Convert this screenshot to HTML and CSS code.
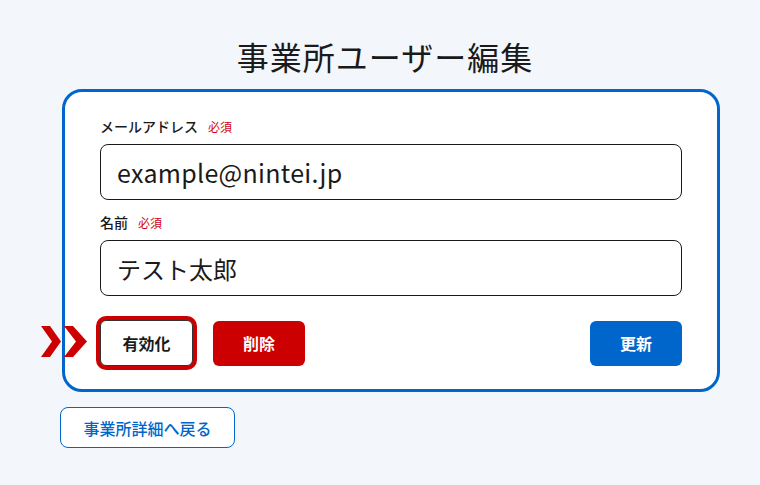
FILE: index.html
```html
<!DOCTYPE html>
<html lang="ja">
<head>
<meta charset="utf-8">
<link rel="stylesheet" href="styles.css">
</head>
<body>
<main class="page">
  <h1 class="title">事業所ユーザー編集</h1>
  <section class="card">
    <div class="field">
      <label class="label">メールアドレス<span class="req">必須</span></label>
      <div class="input input-latin">example@nintei.jp</div>
    </div>
    <div class="field">
      <label class="label">名前<span class="req">必須</span></label>
      <div class="input">テスト太郎</div>
    </div>
    <div class="actions">
      <div class="left">
        <div class="enable-wrap">
          <svg class="chevrons" width="50" height="32" viewBox="0 0 50 32">
            <polygon points="0,0 9,0 20,15.5 9,31 0,31 11,15.5" fill="#cc0000"/>
            <polygon points="23,0 32,0 46,15.5 32,31 23,31 35,15.5" fill="#cc0000"/>
          </svg>
          <button class="btn btn-enable">有効化</button>
        </div>
        <button class="btn btn-delete">削除</button>
      </div>
      <button class="btn btn-update">更新</button>
    </div>
  </section>
  <div class="back-row">
    <button class="btn-back">事業所詳細へ戻る</button>
  </div>
</main>
</body>
</html>
```
FILE: styles.css
```css
html, body {
  margin: 0;
  padding: 0;
  background: #f3f6fa;
}
body {
  font-family: "Noto Sans CJK JP", "Noto Sans", sans-serif;
  color: #1a1a1a;
}
.page {
  width: 658px;
  margin-left: 62px;
  padding-top: 34px;
}
.title {
  margin: 0 0 11px 0;
  font-size: 32px;
  font-weight: 400;
  line-height: 44px;
  letter-spacing: 1px;
  text-align: center;
  padding-right: 12px;
  color: #1a1a1a;
}
.card {
  background: #fff;
  border: 3px solid #0066cc;
  border-radius: 20px;
  padding: 25px 35px 23px 35px;
}
.field {
  display: flex;
  flex-direction: column;
  gap: 8px;
  margin-bottom: 13px;
}
.label {
  font-size: 14px;
  line-height: 19px;
  font-weight: 500;
  display: flex;
  align-items: center;
  gap: 10px;
}
.req {
  color: #d0021b;
  font-size: 12px;
  font-weight: 400;
}
.input {
  height: 54px;
  border: 1px solid #1a1a1a;
  border-radius: 8px;
  padding: 0 16px;
  display: flex;
  align-items: center;
  font-size: 24px;
  color: #1a1a1a;
}
.input-latin {
  font-size: 25px;
  letter-spacing: 0.3px;
}
.actions {
  display: flex;
  justify-content: space-between;
  align-items: center;
  padding-top: 11px;
}
.left {
  display: flex;
  align-items: center;
  gap: 20px;
}
.enable-wrap {
  position: relative;
}
.chevrons {
  position: absolute;
  left: -59px;
  top: 6px;
}
.btn {
  width: 93px;
  height: 46px;
  border-radius: 6px;
  font-family: inherit;
  font-size: 16px;
  font-weight: 700;
  cursor: pointer;
  display: block;
}
.btn-enable {
  background: #fff;
  border: 1px solid #333;
  color: #1a1a1a;
  box-shadow: 0 0 0 4px #cc0000;
}
.btn-delete {
  background: #cc0000;
  border: none;
  color: #fff;
  width: 92px;
  height: 45px;
}
.btn-update {
  background: #0066cc;
  border: none;
  color: #fff;
  width: 92px;
  height: 45px;
}
.back-row {
  margin-left: -2px;
  padding-top: 15px;
}
.btn-back {
  width: 175px;
  height: 41px;
  background: #fff;
  border: 1px solid #0066cc;
  border-radius: 8px;
  color: #0066cc;
  font-family: inherit;
  font-size: 16px;
  font-weight: 500;
}
```
